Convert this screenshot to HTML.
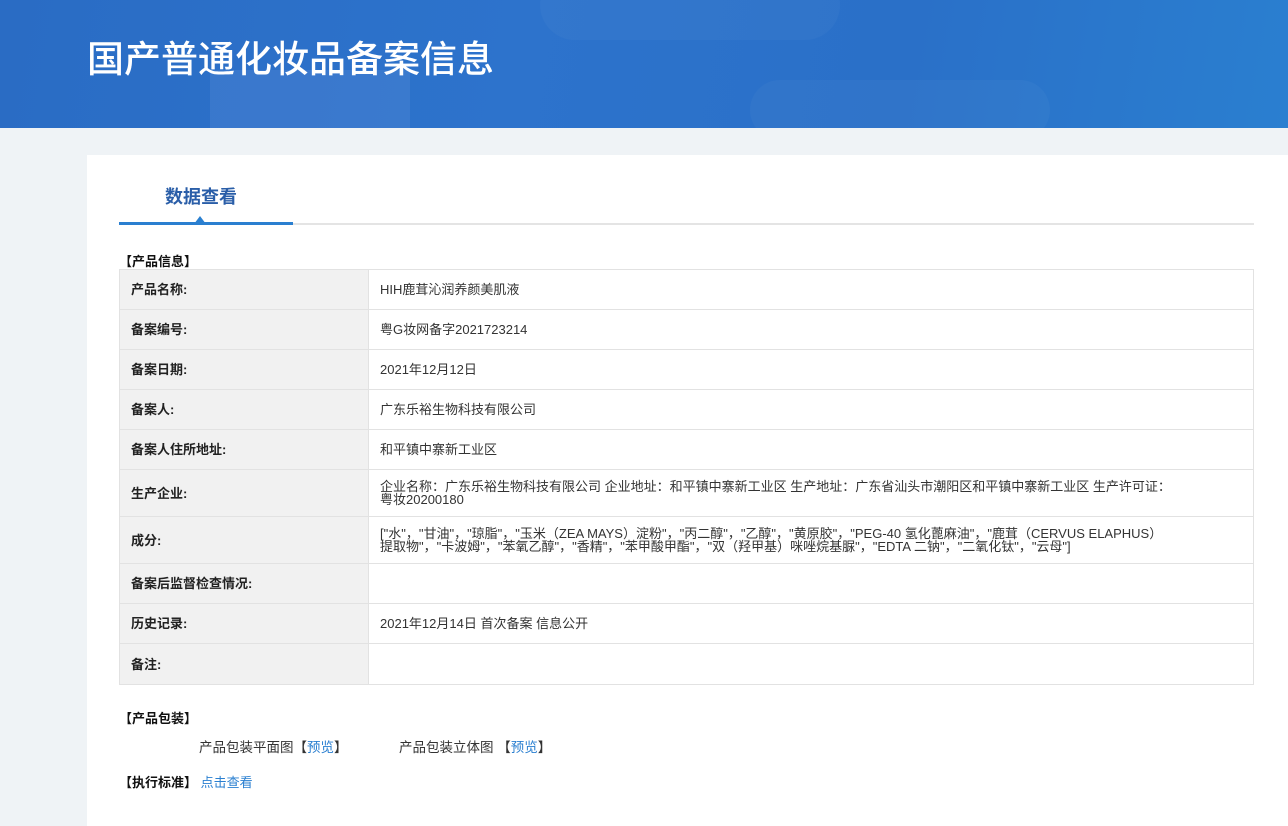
<!DOCTYPE html>
<html><head><meta charset="utf-8"><style>
*{margin:0;padding:0;box-sizing:border-box}
body{width:1288px;height:826px;overflow:hidden;background:#eff3f6;font-family:"Liberation Sans","Noto Sans CJK SC",sans-serif;font-size:13px;color:#333}
.hdr{position:absolute;left:0;top:0;width:1288px;height:128px;background:linear-gradient(100deg,#2a6cc4 0%,#2d73cc 40%,#2a70c8 70%,#2a7fd0 100%);overflow:hidden}
.hdr h1{position:absolute;left:87px;top:29px;font-size:37px;font-weight:500;color:#fff;font-family:"Noto Sans CJK SC",sans-serif}
.card{position:absolute;left:87px;top:155px;width:1201px;height:671px;background:#fff}
.tab{position:absolute;left:78px;top:28px;font-size:18px;font-weight:bold;color:#2a5ea8}
.line{position:absolute;left:32px;top:68px;width:1135px;height:2px;background:#e4e4e4}
.line b{position:absolute;left:0;top:-1px;width:174px;height:3px;background:#2a7fd0}
.tri{position:absolute;left:107px;top:61px;width:0;height:0;border-left:6px solid transparent;border-right:6px solid transparent;border-bottom:8px solid #2a7fd0}
.sec{position:absolute;left:32px;font-weight:bold;color:#111;font-size:13px}
table{position:absolute;left:32px;top:114px;width:1135px;border-collapse:collapse;border:1px solid #b8b8b8}
td{border:1px solid #e2e2e2;padding:0 11px;vertical-align:middle;line-height:13px}
td.r{padding-right:60px}
td.l{width:249px;background:#f1f1f1;font-weight:bold;color:#222}
a{color:#2a7fd0;text-decoration:none}
</style></head><body>
<div class="hdr">
<div style="position:absolute;left:540px;top:-30px;width:300px;height:70px;border-radius:40px;background:rgba(255,255,255,.03)"></div>
<div style="position:absolute;left:210px;top:70px;width:200px;height:60px;background:rgba(120,160,230,.18)"></div>
<div style="position:absolute;left:750px;top:80px;width:300px;height:60px;border-radius:40px;background:rgba(255,255,255,.03)"></div>
<h1>国产普通化妆品备案信息</h1></div>
<div class="card">
<div class="tab">数据查看</div>
<div class="line"><b></b></div><div class="tri"></div>
<div class="sec" style="top:96px">【产品信息】</div>
<table>
<tr style="height:40px"><td class="l">产品名称:</td><td class="r">HIH鹿茸沁润养颜美肌液</td></tr>
<tr style="height:40px"><td class="l">备案编号:</td><td class="r">粤G妆网备字2021723214</td></tr>
<tr style="height:40px"><td class="l">备案日期:</td><td class="r">2021年12月12日</td></tr>
<tr style="height:40px"><td class="l">备案人:</td><td class="r">广东乐裕生物科技有限公司</td></tr>
<tr style="height:40px"><td class="l">备案人住所地址:</td><td class="r">和平镇中寨新工业区</td></tr>
<tr style="height:47px"><td class="l">生产企业:</td><td class="r">企业名称：广东乐裕生物科技有限公司 企业地址：和平镇中寨新工业区 生产地址：广东省汕头市潮阳区和平镇中寨新工业区 生产许可证：<br>粤妆20200180</td></tr>
<tr style="height:47px"><td class="l">成分:</td><td class="r">["水"，"甘油"，"琼脂"，"玉米（ZEA MAYS）淀粉"，"丙二醇"，"乙醇"，"黄原胶"，"PEG-40 氢化蓖麻油"，"鹿茸（CERVUS ELAPHUS）<br>提取物"，"卡波姆"，"苯氧乙醇"，"香精"，"苯甲酸甲酯"，"双（羟甲基）咪唑烷基脲"，"EDTA 二钠"，"二氧化钛"，"云母"]</td></tr>
<tr style="height:40px"><td class="l">备案后监督检查情况:</td><td class="r"></td></tr>
<tr style="height:40px"><td class="l">历史记录:</td><td class="r">2021年12月14日 首次备案 信息公开</td></tr>
<tr style="height:41px"><td class="l">备注:</td><td class="r"></td></tr>
</table>
<div class="sec" style="top:553px">【产品包装】</div>
<div style="position:absolute;left:112px;top:581px;font-size:13.5px">产品包装平面图【<a>预览</a>】</div>
<div style="position:absolute;left:312px;top:581px;font-size:13.5px">产品包装立体图 【<a>预览</a>】</div>
<div class="sec" style="top:617px">【执行标准】 <a style="font-weight:normal">点击查看</a></div>
</div>
</body></html>
